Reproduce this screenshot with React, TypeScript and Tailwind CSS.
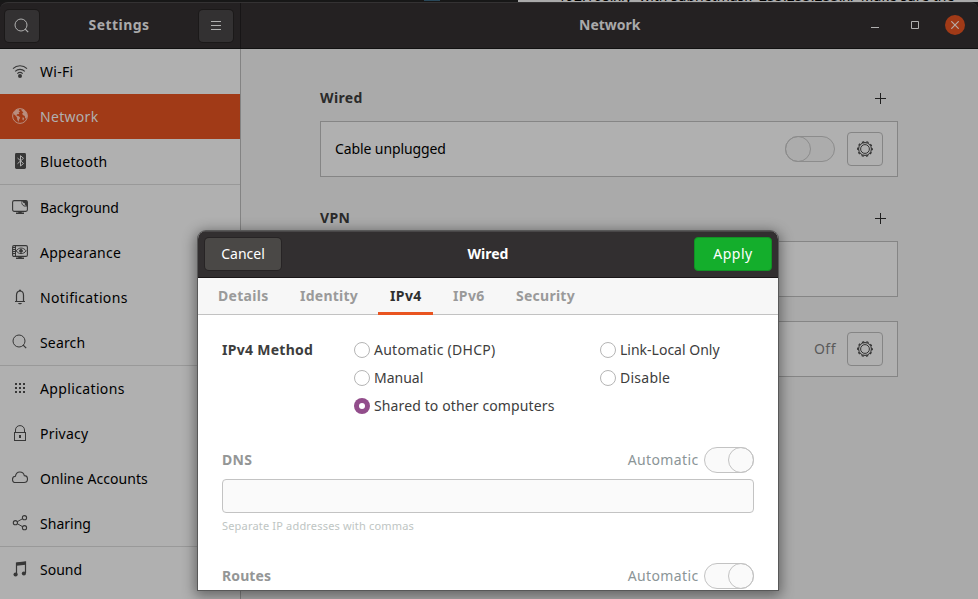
import React from "react";

type IconProps = { children: React.ReactNode; className?: string };
const Icon = ({ children, className = "text-[#3a3a3a]" }: IconProps) => (
  <svg width="16" height="16" viewBox="0 0 16 16" fill="none" stroke="currentColor" strokeWidth="1" className={"block shrink-0 " + className}>
    {children}
  </svg>
);

const SearchGlyph = () => (
  <>
    <circle cx="7" cy="7" r="6" />
    <path d="M11.2 11.2 14.2 14.2" strokeWidth="1.2" />
  </>
);

const icons: Record<string, React.ReactNode> = {
  "Wi-Fi": (
    <>
      <path d="M1 5.6C4.8 1.8 11.2 1.8 15 5.6M3.2 8.3c2.7-2.6 6.9-2.6 9.6 0M5.3 10.6c1.5-1.4 3.9-1.4 5.4 0" strokeWidth="1.1" />
      <circle cx="8" cy="13" r="2" fill="currentColor" stroke="none" />
    </>
  ),
  Network: (
    <>
      <circle cx="8" cy="8" r="7.4" />
      <path d="M2 4 4.5 1.6 7.2 1l-.4 1.6 1.4.6-1.6 1.4L7.3 6 5 6.2 4.5 7.5l2.3.7 1.4 1.6-1.1 1.6-.5 2.6-1.3-2.3-.3-2.3L3.2 7.2 1.5 6zM9.5 1.1l3 1.1L14.7 5l.6 3-1 2.9-1.2-1-.3-1.9-2-.9-.6-1.7 1.2-1.2L9.7 3zM10.6 9.2l1.6.8-.8 2.5-1-1z" fill="currentColor" stroke="none" />
    </>
  ),
  Bluetooth: (
    <>
      <rect x="3" y="0" width="11" height="16" rx="1.4" fill="currentColor" stroke="none" />
      <path d="m5.5 5 6 5.5L8.5 13V2.7l3 2.6-6 5.4" stroke="#b0b0b0" />
    </>
  ),
  Background: (
    <>
      <rect x=".6" y="1.6" width="14.8" height="10.8" rx="1.6" strokeWidth="1.1" />
      <path d="M9.5 1.2H14l1.5 1.5v4.7H12L9.5 5z" fill="currentColor" stroke="none" />
      <path d="M10 2c0 3 .8 4.5 4.8 5-1.9-.6-2.3-1.9-2.1-3-1.2.1-2.1-.6-2.7-2z" fill="#b0b0b0" stroke="none" />
      <path d="M6.3 12h3.4v1.6H12V15H4v-1.4h2.3z" fill="currentColor" stroke="none" />
    </>
  ),
  Appearance: (
    <>
      <rect x=".6" y="1.6" width="14.8" height="10.8" rx="1.4" strokeWidth="1.1" />
      <path d="M1 3.5h3M1 5.5h3M1 7.5h3M1 9.5h3M3.5 1.5v11" />
      <path d="M4.2 6.9c2.6-3.8 7-3.8 10 0-3 3.6-7.4 3.6-10 0z" />
      <circle cx="9" cy="6.9" r="1.4" fill="currentColor" />
      <path d="M6.3 12h3.4v1.6H12V15H4v-1.4h2.3z" fill="currentColor" stroke="none" />
    </>
  ),
  Notifications: (
    <>
      <path d="M3 12.5h10M4.5 12V6.2C4.5 3.6 6 2 8 2s3.5 1.6 3.5 4.2V12" strokeWidth="1.2" />
      <path d="M7 .8h2v1.4H7zM6 14h4c-.3 1-1 1.3-2 1.3S6.3 15 6 14z" fill="currentColor" stroke="none" />
    </>
  ),
  Search: <SearchGlyph />,
  Applications: (
    <path d="M3 3h2v2H3zM7 3h2v2H7zM11 3h2v2h-2zM3 7h2v2H3zM7 7h2v2H7zM11 7h2v2h-2zM3 11h2v2H3zM7 11h2v2H7zM11 11h2v2h-2z" fill="currentColor" stroke="none" />
  ),
  Privacy: (
    <>
      <rect x="2.5" y="7.5" width="11" height="8" />
      <path d="M3.5 7.5V5c0-2.5 1.9-4.4 4.5-4.4s4.5 1.9 4.5 4.4v2.5" />
      <path d="M7 10h2v3H7z" fill="currentColor" stroke="none" />
    </>
  ),
  "Online Accounts": <path d="M3.7 12.5C1.8 12.5.5 11.2.5 9.4c0-1.7 1.2-3 2.9-3.1C3.8 3.7 5.5 2 7.8 2c2.2 0 4 1.4 4.5 3.6 1.9.1 3.2 1.6 3.2 3.4 0 2-1.4 3.5-3.4 3.5z" strokeWidth="1.1" />,
  Sharing: (
    <>
      <circle cx="3.4" cy="7.7" r="2.1" strokeWidth="1.1" />
      <circle cx="12.5" cy="2.7" r="2.1" strokeWidth="1.1" />
      <circle cx="12.5" cy="12.7" r="2.1" strokeWidth="1.1" />
      <path d="m5.3 6.7 5.3-3M5.3 8.7l5.3 3" />
    </>
  ),
  Sound: (
    <>
      <path d="M4.5 13V2l9-1v11" strokeWidth="1.2" />
      <path d="M4.5 1.8 13.7.8v3L4.5 4.8z" fill="currentColor" stroke="none" />
      <ellipse cx="3.6" cy="13.5" rx="2.1" ry="1.9" fill="currentColor" stroke="none" />
      <ellipse cx="11.9" cy="12.5" rx="2.1" ry="1.9" fill="currentColor" stroke="none" />
    </>
  ),
};

const groups: [string, string][][] = [
  [["Wi-Fi", "tracking-[0.25px]"], ["Network", "tracking-[0.3px]"], ["Bluetooth", "tracking-[0.28px]"]],
  [["Background", "-tracking-[0.08px]"], ["Appearance", "tracking-[0.25px]"], ["Notifications", "tracking-[0.34px]"], ["Search", "tracking-[0.15px]"]],
  [["Applications", "tracking-[0.36px]"], ["Privacy", "tracking-[0.25px]"], ["Online Accounts", "tracking-[0.06px]"], ["Sharing", "tracking-[0.02px]"]],
  [["Sound", "tracking-[0px]"]],
];

const Sidebar = () => (
  <nav className="w-[241px] shrink-0 border-r border-[#838383] bg-[#b0b0b0]">
    {groups.map((group, i) => (
      <div key={i} className={i < groups.length - 1 ? "border-b border-[#999999]" : ""}>
        {group.map(([name, tracking]) => (
          <div key={name} className={"flex h-[45px] items-center gap-3 pb-px pl-3 " + (name === "Network" ? "bg-[#a13a17] text-[#b0b0b0]" : "text-black")}>
            <Icon className={name === "Network" ? "text-[#b98d7e]" : "text-[#373737]"}>{icons[name]}</Icon>
            <span className={"whitespace-nowrap pt-[2px] " + tracking}>{name}</span>
          </div>
        ))}
      </div>
    ))}
  </nav>
);

const Gear = () => (
  <svg width="18" height="18" viewBox="0 0 18 18" fill="none" stroke="#262626">
    <circle cx="9" cy="9" r="6.4" strokeWidth="1" />
    <circle cx="9" cy="9" r="7.3" strokeWidth="1.1" strokeDasharray="2.3 2.287" strokeDashoffset="1.1" />
    <circle cx="9" cy="9" r="4.4" strokeWidth="0.9" />
  </svg>
);

const GearButton = () => (
  <div className="flex h-[34px] w-9 items-center justify-center rounded-[4px] border border-[#858585]">
    <Gear />
  </div>
);

const Switch = ({ on, dim }: { on?: boolean; dim?: boolean }) => (
  <div className={"flex h-[26px] w-[50px] shrink-0 rounded-full border " + (on ? "justify-end " : "") + (dim ? "border-[#8c8c8c] bg-[#acacac]" : "border-[#c3c3c3] bg-[#fafafa]")}>
    <div className={"-m-px size-[26px] rounded-full border " + (dim ? "border-[#8c8c8c]" : "border-[#c3c3c3]")} />
  </div>
);

const SectionTitle = ({ children }: { children: React.ReactNode }) => (
  <div className="flex h-6 items-center justify-between pr-3 font-bold tracking-[0.35px] text-[#2a2a2a]">
    <span>{children}</span>
    <svg width="11" height="11" viewBox="0 0 11 11" stroke="#1f1f1f">
      <path d="M0 5.5h11M5.5 0v11" />
    </svg>
  </div>
);

const Radio = ({ label, checked, tracking = "" }: { label: string; checked?: boolean; tracking?: string }) => (
  <div className="flex h-7 items-center gap-1 text-[#3d3d3d]">
    <span className={"flex size-4 items-center justify-center rounded-full " + (checked ? "bg-[#924d8b]" : "border border-[#b5b5b5] bg-white")}>
      {checked && <span className="size-[6px] rounded-full bg-white" />}
    </span>
    <span className={tracking}>{label}</span>
  </div>
);

const tabs = [
  ["Details", "w-[82px] tracking-[0.3px]"],
  ["Identity", "w-[78px] tracking-[0.25px]"],
  ["IPv4", "ml-0 w-[55px] pl-3 tracking-[0.4px]"],
  ["IPv6", "ml-5 w-[63px] tracking-[0.4px]"],
  ["Security", "w-[83px] tracking-[0.25px]"],
];

const Dialog = () => (
  <div className="absolute left-[198px] top-[231px] flex h-[359px] w-[580px] flex-col overflow-hidden rounded-t-[8px] bg-white shadow-[0_0_0_1px_#585858,0_3px_13px_3px_rgba(0,0,0,0.42)]">
    <header className="flex h-[47px] shrink-0 items-center justify-between border-b border-t border-[#1a1718] border-t-[#494748] bg-[#322f30] pb-[2px] pl-[7px] pr-1.5 text-white">
      <div className="mr-[1px] flex h-8 w-[76px] items-center justify-center rounded-[4px] bg-[#4a4846] shadow-[0_0_0_1px_#272425]">Cancel</div>
      <span className="font-bold">Wired</span>
      <div className="flex h-[34px] w-[78px] items-center justify-center rounded-[4px] border border-[#109224] bg-[#14ae2c] tracking-[0.5px]">Apply</div>
    </header>
    <div className="flex h-[37px] shrink-0 border-b border-[#c2c2c2] bg-[#f7f7f7] pl-5 font-bold text-[#9a9a9a]">
      {tabs.map(([name, width]) => (
        <div key={name} className={"-mb-px flex h-[37px] items-center whitespace-nowrap " + width + (name === "IPv4" ? " border-b-[3px] border-[#e95420] pt-[2px] text-[#303030]" : " pb-[2px]")}>
          {name}
        </div>
      ))}
    </div>
    <main className="flex flex-col px-6 pt-[21px]">
      <div className="flex">
        <div className="flex h-7 w-[132px] items-center font-bold tracking-[0.28px] text-[#3d3d3d]">IPv4 Method</div>
        <div className="w-[246px]">
          <Radio label="Automatic (DHCP)" tracking="tracking-[0.25px]" />
          <Radio label="Manual" />
          <Radio label="Shared to other computers" checked tracking="tracking-[0.12px]" />
        </div>
        <div>
          <Radio label="Link-Local Only" />
          <Radio label="Disable" tracking="tracking-[0.25px]" />
        </div>
      </div>
      <div className="mt-[27px] flex h-[26px] items-center">
        <span className="flex-1 font-bold tracking-[0.3px] text-[#949696]">DNS</span>
        <span className="mr-[5.5px] tracking-[0.38px] text-[#8b9597]">Automatic</span>
        <Switch on />
      </div>
      <div className="mt-[6px] h-[34px] rounded-[4px] border border-[#c3c3c3] bg-[#fafafa]" />
      <div className="mt-[5px] h-4 text-[11px] leading-4 tracking-[0.18px] text-[#bec5c3]">Separate IP addresses with commas</div>
      <div className="mt-[29px] flex h-[26px] items-center">
        <span className="flex-1 font-bold tracking-[0.1px] text-[#949696]">Routes</span>
        <span className="mr-[5.5px] tracking-[0.38px] text-[#8b9597]">Automatic</span>
        <Switch on />
      </div>
    </main>
  </div>
);

export default function App() {
  return (
    <div className="relative flex h-[599px] w-[978px] flex-col overflow-hidden bg-[#aaaaaa] font-['Noto_Sans',sans-serif] text-[14px] leading-5">
      <div className="flex h-[49px] shrink-0 flex-col bg-[#191718]">
        <div className="flex h-[2px] shrink-0 overflow-hidden">
          <div className="w-[518px] shrink-0 bg-[#171717] pl-[424px]">
            <div className="h-[1px] w-4 bg-[#29485a]" />
          </div>
          <div className="w-[460px] overflow-hidden bg-[#aaaaaa] pl-10">
            <div className="-mt-[14px] whitespace-pre text-[14px] leading-5 text-black">192.168.x.y  with subnetmask  255.255.255.x.  Make sure the</div>
          </div>
        </div>
        <div className="flex flex-1 rounded-t-[8px] border-b border-t border-b-[#111111] border-t-[#343233] bg-[#242122]">
          <div className="flex w-[241px] items-center justify-between border-r border-[#171516] pl-[5px] pr-[7px]">
            <div className="flex h-8 w-[34px] items-center justify-center rounded-[4px] bg-[#333132] shadow-[0_0_0_1px_#1b1919]">
              <Icon className="text-[#b0b0b0]"><SearchGlyph /></Icon>
            </div>
            <span className="pb-[2px] font-bold tracking-[0.45px] text-[#aaaaaa]">Settings</span>
            <div className="flex h-8 w-[34px] items-center justify-center rounded-[4px] bg-[#333132] shadow-[0_0_0_1px_#1b1919]">
              <svg width="10" height="9" stroke="#b0b0b0"><path d="M0 .5h10M0 4.5h10M0 8.5h10" /></svg>
            </div>
          </div>
          <div className="flex flex-1 items-center">
            <span className="w-[630px] pb-[2px] pl-[338px] font-bold text-[#aaaaaa]">Network</span>
            <svg width="8" height="9" stroke="#b0b0b0" className="shrink-0"><path d="M0 6.5h8" /></svg>
            <svg width="8" height="8" fill="none" stroke="#b0b0b0" className="-mt-[2px] ml-8 shrink-0"><path d="M.5.5h7v7h-7z" /></svg>
            <div className="-mt-px ml-[26px] flex size-5 shrink-0 items-center justify-center rounded-full bg-[#a13a17]">
              <svg width="8" height="8" stroke="#b8aaa5" strokeWidth="1.2"><path d="m.3.3 7.4 7.4M7.7.3.3 7.7" /></svg>
            </div>
          </div>
        </div>
      </div>
      <div className="flex flex-1">
        <Sidebar />
        <div className="flex-1 bg-[#aaaaaa] pl-[79px] pt-[37px]">
          <div className="w-[578px]">
            <SectionTitle>Wired</SectionTitle>
            <div className="mt-[11px] flex h-14 items-center border border-[#858585] bg-[#b0b0b0] pl-3.5 pr-3.5">
              <span className="flex-1 -tracking-[0.1px] text-black">Cable unplugged</span>
              <Switch dim />
              <div className="w-3" />
              <GearButton />
            </div>
            <div className="h-[29px]" />
            <SectionTitle>VPN</SectionTitle>
            <div className="mt-[11px] h-14 border border-[#858585] bg-[#b0b0b0]" />
            <div className="mt-6 flex h-14 items-center justify-end gap-[11px] border border-[#858585] bg-[#b0b0b0] pr-3.5">
              <span className="tracking-[0.5px] text-[#5a5a5a]">Off</span>
              <GearButton />
            </div>
          </div>
        </div>
      </div>
      <Dialog />
    </div>
  );
}
